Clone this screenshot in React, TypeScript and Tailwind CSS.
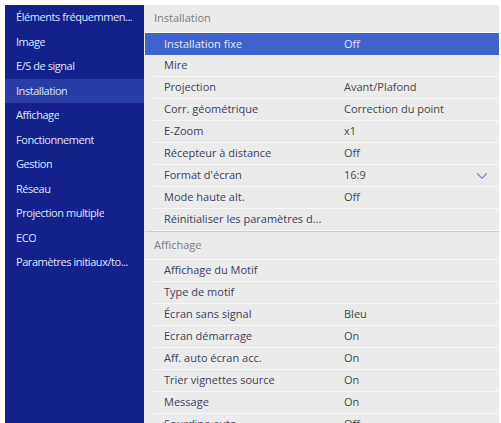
import { ChevronDown } from "lucide-react"

type Row = { label: string; value?: string; active?: boolean; select?: boolean }

const menu = [
  "Éléments fréquemmen...",
  "Image",
  "E/S de signal",
  "Installation",
  "Affichage",
  "Fonctionnement",
  "Gestion",
  "Réseau",
  "Projection multiple",
  "ECO",
  "Paramètres initiaux/to...",
]

const sections: { title: string; rows: Row[] }[] = [
  {
    title: "Installation",
    rows: [
      { label: "Installation fixe", value: "Off", active: true },
      { label: "Mire" },
      { label: "Projection", value: "Avant/Plafond" },
      { label: "Corr. géométrique", value: "Correction du point" },
      { label: "E-Zoom", value: "x1" },
      { label: "Récepteur à distance", value: "Off" },
      { label: "Format d'écran", value: "16:9", select: true },
      { label: "Mode haute alt.", value: "Off" },
      { label: "Réinitialiser les paramètres d..." },
    ],
  },
  {
    title: "Affichage",
    rows: [
      { label: "Affichage du Motif" },
      { label: "Type de motif" },
      { label: "Écran sans signal", value: "Bleu" },
      { label: "Ecran démarrage", value: "On" },
      { label: "Aff. auto écran acc.", value: "On" },
      { label: "Trier vignettes source", value: "On" },
      { label: "Message", value: "On" },
      { label: "Sourdine auto", value: "Off" },
    ],
  },
]

function SettingRow({ row }: { row: Row }) {
  if (row.active) {
    return (
      <div className="flex h-[22px] items-center bg-[#3f62cd] text-[#e4eaff]">
        <span className="w-[199px] pl-[19px] truncate">{row.label}</span>
        <span>{row.value}</span>
      </div>
    )
  }
  return (
    <div className="ml-[9px] flex h-[22px] items-center border-b border-[#f9f9f9] relative">
      <span className="w-[190px] pl-[10px] truncate text-[#3c405e]">{row.label}</span>
      <span className="text-[#474747]">{row.value}</span>
      {row.select && (
        <ChevronDown className="absolute right-[8px] top-[2px] text-[#8c94c6]" size={18} strokeWidth={2} />
      )}
    </div>
  )
}

export default function App() {
  return (
    <div
      className="w-[501px] h-[423px] overflow-hidden bg-white pt-[5px] pl-[5px] pr-[2px] text-[11px]"
      style={{ fontFamily: "'Open Sans', 'Noto Sans', sans-serif" }}
    >
      <div className="flex h-full">
        <div className="w-[139px] shrink-0 bg-[#15218b] text-[#dfe4f7] tracking-[-0.45px]">
          {menu.map((item, i) => (
            <div
              key={item}
              className={`flex h-[24.5px] items-center pl-[11px] ${i === 3 ? "bg-[#2a3da6]" : ""}`}
            >
              <span className="whitespace-nowrap overflow-hidden">{item}</span>
            </div>
          ))}
        </div>
        <div className="flex-1 bg-[#ebebeb] pl-px">
          {sections.map((section, si) => (
            <div key={section.title} className={si > 0 ? "border-t border-[#c9cbdc]" : ""}>
              <div className="flex h-[28px] items-center pl-[9px] text-[#7b7b7b] border-b border-[#f9f9f9]">
                {section.title}
              </div>
              {section.rows.map((row) => (
                <SettingRow key={row.label} row={row} />
              ))}
            </div>
          ))}
        </div>
      </div>
    </div>
  )
}
